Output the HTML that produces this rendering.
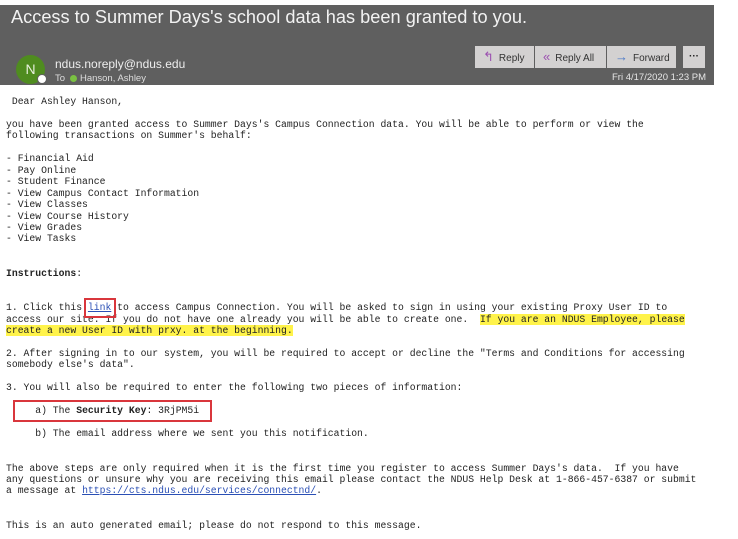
<!DOCTYPE html>
<html><head><style>
body{margin:0;width:738px;height:539px;background:#fff;position:relative;overflow:hidden;font-family:"Liberation Sans",sans-serif}
.hdr{position:absolute;left:0;top:5px;width:714px;height:80px;background:#5f5f5f}
.title{position:absolute;left:11px;top:2px;color:#f2f2f2;font-size:18.2px;white-space:nowrap}
.av{position:absolute;left:16px;top:55px;width:29px;height:29px;border-radius:50%;background:#4f8c1f;color:#e8f0dc;font-size:14px;line-height:29px;text-align:center}
.dot{position:absolute;left:37px;top:74px;width:8px;height:8px;border-radius:50%;background:#fff;border:1px solid #5f5f5f}
.from{position:absolute;left:55px;top:52px;color:#eee;font-size:12px}
.to{position:absolute;left:55px;top:68px;color:#ddd;font-size:9.5px}
.btn{position:absolute;top:41px;height:22px;background:#d3d1d1;font-size:10px;color:#333;line-height:22px;white-space:nowrap}
.ic{color:#9b4fb0;font-size:13px;margin-right:5px}
.date{position:absolute;left:560px;top:67px;font-size:9.5px;color:#e6e6e6;width:146px;text-align:right}
pre{position:absolute;left:6px;margin:0;font-family:"Liberation Mono",monospace;font-size:9.75px;line-height:11.45px;color:#222}
.hl{background:#fff34a}
.box{position:absolute;border:2px solid #d9363c}
</style></head><body>
<div class="hdr">
<div class="title">Access to Summer Days's school data has been granted to you.</div>
<div class="from">ndus.noreply@ndus.edu</div>
<div class="to">To &nbsp;<span style="display:inline-block;width:7px;height:7px;border-radius:50%;background:#7ac142;vertical-align:-1px"></span> Hanson, Ashley</div>
<div class="btn" style="left:475px;width:59px;padding-left:8px;box-sizing:border-box"><span class="ic">↰</span>Reply</div>
<div class="btn" style="left:535px;width:71px;padding-left:8px;box-sizing:border-box"><span class="ic">«</span>Reply All</div>
<div class="btn" style="left:607px;width:69px;padding-left:8px;box-sizing:border-box"><span class="ic" style="color:#4a78c8">→</span>Forward</div>
<div class="btn" style="left:683px;width:22px;text-align:center;font-weight:bold;color:#222">···</div>
<div class="date">Fri 4/17/2020 1:23 PM</div>
</div>
<div class="av">N</div><div class="dot"></div>
<pre style="top:96px"> Dear Ashley Hanson,

you have been granted access to Summer Days's Campus Connection data. You will be able to perform or view the
following transactions on Summer's behalf:

- Financial Aid
- Pay Online
- Student Finance
- View Campus Contact Information
- View Classes
- View Course History
- View Grades
- View Tasks


<b>Instructions</b>:


1. Click this <u style="color:#2a4fb5">link</u> to access Campus Connection. You will be asked to sign in using your existing Proxy User ID to
access our site. If you do not have one already you will be able to create one.  <span class="hl">If you are an NDUS Employee, please</span>
<span class="hl">create a new User ID with prxy. at the beginning.</span>

2. After signing in to our system, you will be required to accept or decline the "Terms and Conditions for accessing
somebody else's data".

3. You will also be required to enter the following two pieces of information:

     a) The <b>Security Key</b>: 3RjPM5i

     b) The email address where we sent you this notification.


The above steps are only required when it is the first time you register to access Summer Days's data.  If you have
any questions or unsure why you are receiving this email please contact the NDUS Help Desk at 1-866-457-6387 or submit
a message at <u style="color:#2a4fb5">https://cts.ndus.edu/services/connectnd/</u>.


This is an auto generated email; please do not respond to this message.</pre>
<div class="box" style="left:84px;top:298px;width:28px;height:16px"></div>
<div class="box" style="left:13px;top:400px;width:195px;height:18px"></div>
</body></html>
